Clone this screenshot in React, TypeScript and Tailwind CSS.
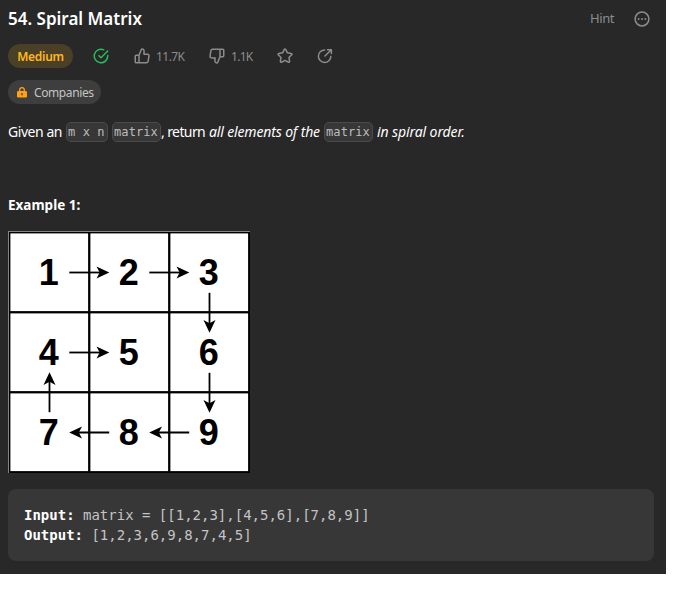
import React from "react";

const UI = "font-['Noto_Sans',sans-serif]";
const MONO = "font-['DejaVu_Sans_Mono',monospace]";

function CheckIcon() {
  return (
    <svg viewBox="0 0 24 24" className="h-[18px] w-[18px] fill-[#2cbb5d]">
      <path d="M20 12.005v-.828a1 1 0 112 0v.829a10 10 0 11-5.93-9.14 1 1 0 01-.814 1.826A8 8 0 1020 12.005z" />
      <path d="M8.593 10.852a1 1 0 011.414 0L12 12.844l8.293-8.3a1 1 0 011.415 1.413l-9 9.009a1 1 0 01-1.415 0l-2.7-2.7a1 1 0 010-1.414z" />
    </svg>
  );
}

function ThumbIcon({ down = false }: { down?: boolean }) {
  return (
    <svg
      viewBox="0 0 24 24"
      className={`h-[18px] w-[18px] fill-none stroke-[#8c8c8c] stroke-2 ${down ? "rotate-180" : ""}`}
      strokeLinejoin="round"
      strokeLinecap="round"
    >
      <path d="M8 11 11 3.600c.3-.6.8-.9 1.400-.8 1.700.2 2.600 1.600 2.400 3.300L14.500 9.500h4.800c1.300 0 2.200 1.100 2 2.400l-1.100 7c-.2 1.200-1.100 2.100-2.300 2.100H8zM8 21H4.300c-.7 0-1.300-.6-1.300-1.300v-7.400c0-.7.6-1.300 1.300-1.300H8" />
    </svg>
  );
}

function StarIcon() {
  return (
    <svg viewBox="0 0 24 24" className="h-[18px] w-[18px] fill-none stroke-[#8c8c8c] stroke-2" strokeLinejoin="round">
      <path d="M11.100 3.100c.4-.8 1.400-.8 1.800 0l2.300 4.700 5.200.8c.8.1 1.200 1.100.6 1.700l-3.700 3.700.9 5.200c.1.900-.8 1.500-1.500 1.100L12 17.900l-4.700 2.400c-.7.400-1.600-.2-1.500-1.100l.9-5.200L3 10.300c-.6-.6-.2-1.600.6-1.700l5.200-.8z" />
    </svg>
  );
}

function ShareIcon() {
  return (
    <svg viewBox="0 0 24 24" className="h-[18px] w-[18px] fill-none stroke-[#8c8c8c] stroke-2" strokeLinecap="round" strokeLinejoin="round">
      <path d="M11.500 4a8.300 8.300 0 1 0 8.300 8.500M12 12 20 4M15.300 3.500h5.200v5.200" />
    </svg>
  );
}

function MoreIcon() {
  return (
    <svg viewBox="0 0 24 24" className="h-[18px] w-[18px] fill-[#8c8c8c]">
      <circle cx="12" cy="12" r="9.200" className="fill-none stroke-[#8c8c8c] stroke-2" />
      <circle cx="7.500" cy="12" r="1.300" />
      <circle cx="12" cy="12" r="1.300" />
      <circle cx="16.500" cy="12" r="1.300" />
    </svg>
  );
}

function LockIcon() {
  return (
    <svg viewBox="0 0 10 11" className="h-[11px] w-[10px]">
      <path d="M2.700 5V3a2.300 2.300 0 0 1 4.600 0v2" className="fill-none stroke-[#ffa116] stroke-[1.300]" />
      <rect x="0" y="4" width="10" height="6.500" rx="1.300" className="fill-[#ffa116]" />
      <rect x="4.300" y="6" width="1.400" height="2.400" rx=".7" className="fill-[#4a3d2b]" />
    </svg>
  );
}

function Code({ children, className = "" }: { children: React.ReactNode; className?: string }) {
  return (
    <code
      className={`box-border inline-flex h-5 shrink-0 items-center whitespace-pre rounded-[5px] border border-[#4b4b4b] bg-[#373737] pl-px text-[12px] leading-none tracking-[0.1px] text-[#bdbdbd] ${MONO} ${className}`}
    >
      {children}
    </code>
  );
}

const digits = [
  [1, 2, 3],
  [4, 5, 6],
  [7, 8, 9],
];

// Tail position and rotation of each arrow.
const arrows = [
  { x: 61, y: 41.5, r: 0 },
  { x: 141, y: 41.5, r: 0 },
  { x: 61, y: 121.5, r: 0 },
  { x: 201.5, y: 61.5, r: 90 },
  { x: 201.5, y: 141.5, r: 90 },
  { x: 181.5, y: 201.5, r: 180 },
  { x: 101.5, y: 201.5, r: 180 },
  { x: 41.5, y: 181.5, r: 270 },
];

function SpiralDiagram() {
  return (
    <svg viewBox="0 0 242 242" className="block h-[242px] w-[242px]">
      <rect width="242" height="242" fill="#858585" />
      <rect x="1" y="1" width="241" height="241" fill="#000" />
      {digits.map((row, r) =>
        row.map((n, c) => (
          <g key={n}>
            <rect x={2.4 + c * 80} y={2.4 + r * 80} width="77.700" height="77.700" fill="#fff" />
            <text
              x={40.8 + c * 80}
              y={54 + r * 80}
              textAnchor="middle"
              className="font-['Liberation_Sans',Arial,sans-serif] text-[36px] font-bold"
            >
              {n}
            </text>
          </g>
        )),
      )}
      {arrows.map((a, i) => (
        <g key={i} transform={`translate(${a.x} ${a.y}) rotate(${a.r})`}>
          <path d="M0.300 0H32" stroke="#000" strokeWidth="1.800" />
          <path d="M40.300 0 27.500 6 30.700 0 27.500-6z" />
        </g>
      ))}
    </svg>
  );
}

export default function App() {
  return (
    <div className="h-[616px] w-full bg-white">
      <main className={`flex h-[574px] w-[666px] flex-col bg-[#282828] px-2 text-white ${UI}`}>
        <header className="flex h-[38px] shrink-0 items-center justify-between">
          <h1 className="whitespace-nowrap text-[17px] font-semibold">54. Spiral Matrix</h1>
          <div className="mr-[7px] flex items-center gap-[18px] text-[#8c8c8c]">
            <span className="w-[25px] text-[13px] tracking-[-0.4px]">Hint</span>
            <MoreIcon />
          </div>
        </header>

        <div className="mt-[6px] flex h-6 shrink-0 items-center text-[12px] text-[#8c8c8c]">
          <span className="flex h-6 w-[65px] items-center justify-center rounded-full bg-[#4a3f27] pt-[2px] font-semibold tracking-[-0.3px] text-[#ffb81c]">
            Medium
          </span>
          <span className="ml-[19px]"><CheckIcon /></span>
          <div className="ml-[23px] flex w-[75px] items-center gap-[5px]">
            <ThumbIcon />
            <span className="pt-[2px] tracking-[-0.55px]">11.7K</span>
          </div>
          <div className="flex w-[68px] items-center gap-[5px]">
            <ThumbIcon down />
            <span className="pt-[2px] tracking-[-0.7px]">1.1K</span>
          </div>
          <StarIcon />
          <span className="ml-[22px]"><ShareIcon /></span>
        </div>

        <div className="mt-3 flex h-6 w-[93px] shrink-0 items-center gap-[7px] rounded-full bg-[#3e3e3e] pl-[9px] text-[12px] text-[#c4c4c4]">
          <LockIcon />
          <span className="pt-[2px] tracking-[-0.4px]">Companies</span>
        </div>

        <p className="mt-[18px] flex h-5 shrink-0 items-center whitespace-pre text-[14px]">
          <span className="w-[58px] pb-[2px] tracking-[-0.45px]">Given an</span>
          <Code className="w-[42px]">m x n</Code>
          <Code className="ml-1 w-[49px]">matrix</Code>
          <span className="w-[48px] pb-[2px] tracking-[-0.6px]">, return </span>
          <em className="w-[115px] pb-[2px] tracking-[-0.15px]">all elements of the</em>
          <Code className="w-[49px]">matrix</Code>
          <em className="ml-1 pb-[2px] tracking-[-0.1px]">in spiral order.</em>
        </p>

        <h2 className="mt-[53px] h-5 shrink-0 text-[13.5px] font-bold leading-5">Example 1:</h2>
        <div className="mt-4 shrink-0"><SpiralDiagram /></div>

        <pre className={`mt-4 mr-1 h-[72px] shrink-0 rounded-lg bg-[#373737] px-4 pt-4 text-[14px] leading-5 text-[#c4c4c4] ${MONO}`}>
          <strong className="text-white">Input:</strong>{" matrix = [[1,2,3],[4,5,6],[7,8,9]]\n"}
          <strong className="text-white">Output:</strong>{" [1,2,3,6,9,8,7,4,5]"}
        </pre>
      </main>
    </div>
  );
}
